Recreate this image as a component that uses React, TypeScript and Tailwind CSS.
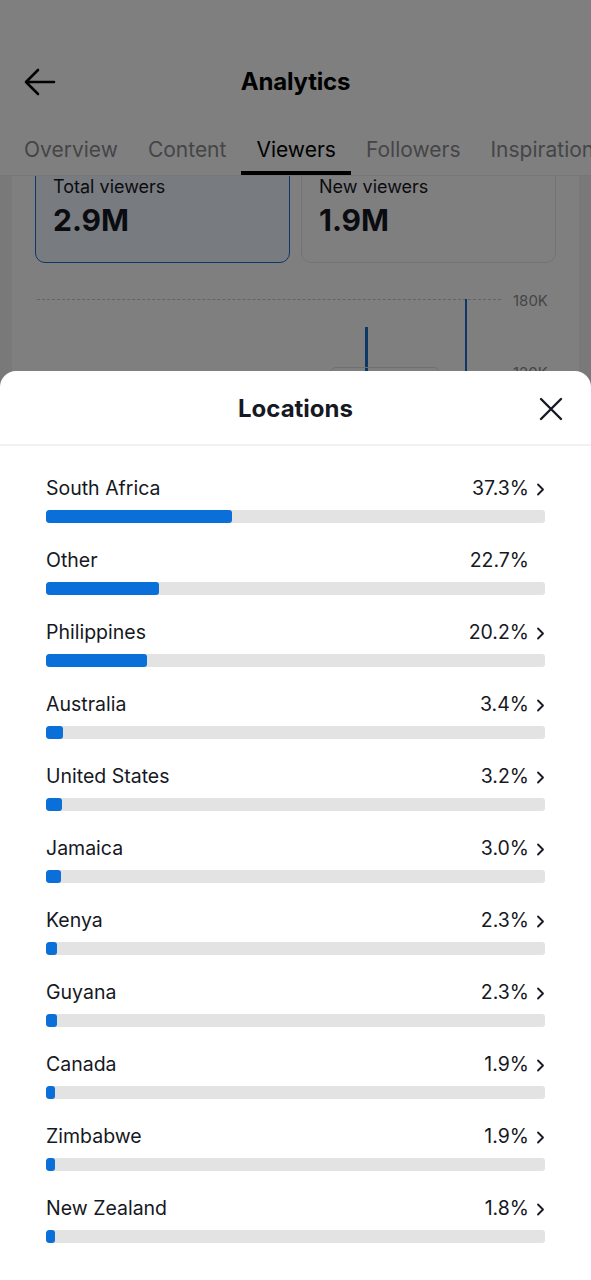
import React from "react";

const rows: { name: string; pct: number; chevron: boolean }[] = [
  { name: "South Africa", pct: 37.3, chevron: true },
  { name: "Other", pct: 22.7, chevron: false },
  { name: "Philippines", pct: 20.2, chevron: true },
  { name: "Australia", pct: 3.4, chevron: true },
  { name: "United States", pct: 3.2, chevron: true },
  { name: "Jamaica", pct: 3.0, chevron: true },
  { name: "Kenya", pct: 2.3, chevron: true },
  { name: "Guyana", pct: 2.3, chevron: true },
  { name: "Canada", pct: 1.9, chevron: true },
  { name: "Zimbabwe", pct: 1.9, chevron: true },
  { name: "New Zealand", pct: 1.8, chevron: true },
];

function Chevron() {
  return (
    <svg width="9" height="13" viewBox="0 0 9 13" fill="none">
      <path d="M2 1.5 L7 6.5 L2 11.5" stroke="#161823" strokeWidth="1.8" strokeLinecap="round" strokeLinejoin="round" />
    </svg>
  );
}

export default function App() {
  return (
    <div
      className="relative w-[591px] h-[1280px] overflow-hidden bg-white text-[#161823]"
      style={{ fontFamily: "Inter, Roboto, 'Liberation Sans', sans-serif" }}
    >
      {/* Background page */}
      <div className="flex flex-col">
        <div className="h-[58px]" />
        <div className="relative flex items-center justify-center h-[48px]">
          <div className="absolute left-[24px] top-[10px]">
            <svg width="32" height="28" viewBox="0 0 32 28" fill="none">
              <path d="M30 14 H3 M14 2 L2 14 L14 26" stroke="#000" strokeWidth="2.6" strokeLinecap="round" strokeLinejoin="round" />
            </svg>
          </div>
          <div className="text-[24px] font-bold text-black tracking-[-0.2px]">Analytics</div>
        </div>
        <div className="h-[22px]" />
        <div className="flex h-[48px] pl-[9px] border-b border-[#ececec] whitespace-nowrap">
          {["Overview", "Content", "Viewers", "Followers", "Inspiration"].map((t) => (
            <div
              key={t}
              className={
                "px-[15px] flex items-start pt-[6px] text-[21px] " +
                (t === "Viewers" ? "text-black border-b-[4px] border-black" : "text-[#8a8b91]")
              }
            >
              {t}
            </div>
          ))}
        </div>
        <div className="bg-[#f2f2f3] px-[12px] h-[300px] overflow-hidden">
          <div className="bg-white h-full overflow-hidden">
            <div className="flex gap-[11px] px-[23px] -mt-[30px]">
              <div className="w-[255px] h-[117px] rounded-[10px] border border-[#1b6fcf] bg-[#f1f7fe] px-[17px] pt-[31px]">
                <div className="text-[18px] leading-[18px] text-[#161823]">Total viewers</div>
                <div className="text-[30px] font-bold leading-[40px] mt-[4px]">2.9M</div>
              </div>
              <div className="w-[255px] h-[117px] rounded-[10px] border border-[#e6e6e8] bg-white px-[17px] pt-[31px]">
                <div className="text-[18px] leading-[18px] text-[#161823]">New viewers</div>
                <div className="text-[30px] font-bold leading-[40px] mt-[4px]">1.9M</div>
              </div>
            </div>
            <div className="relative h-[150px]">
              <div className="absolute left-[25px] top-[36px] w-[464px] border-t border-dashed border-[#c8c8cc]" />
              <div className="absolute left-[501px] top-[27px] text-[15px] text-[#8a8b91]">180K</div>
              <div className="absolute left-[501px] top-[99px] text-[15px] text-[#8a8b91]">120K</div>
              <div className="absolute left-[353px] top-[64px] w-[3px] h-[44px] bg-[#1b6fcf]" />
              <div className="absolute left-[453px] top-[36px] w-[2px] h-[80px] bg-[#1b6fcf]" />
              <div className="absolute left-[318px] top-[104px] w-[110px] h-[30px] rounded-[6px] border border-[#e0e0e0]" />
            </div>
          </div>
        </div>
      </div>

      {/* Dim overlay */}
      <div className="absolute inset-0 bg-black/50" />

      {/* Bottom sheet */}
      <div className="absolute left-0 right-0 top-[371px] bottom-0 bg-white rounded-t-[16px] flex flex-col">
        <div className="relative h-[75px] flex items-center justify-center border-b-[2px] border-[#f1f1f2]">
          <div className="text-[24px] font-bold text-[#161823] mt-[2px]">Locations</div>
          <div className="absolute right-[28px] top-[26px]">
            <svg width="24" height="24" viewBox="0 0 24 24" fill="none">
              <path d="M2 2 L22 22 M22 2 L2 22" stroke="#161823" strokeWidth="2.4" strokeLinecap="round" />
            </svg>
          </div>
        </div>
        <div className="flex flex-col pt-[31px] px-[46px]">
          {rows.map((r) => (
            <div key={r.name} className="flex flex-col h-[72px]">
              <div className="flex items-center justify-between h-[24px]">
                <span className="text-[19.5px] text-[#161823]">{r.name}</span>
                <span className="flex items-center">
                  <span className="text-[19.5px] text-[#161823]">{r.pct.toFixed(1)}%</span>
                  <span className="w-[16px] flex justify-end">{r.chevron ? <Chevron /> : null}</span>
                </span>
              </div>
              <div className="mt-[9px] h-[13px] rounded-[3px] bg-[#e3e3e4] overflow-hidden">
                <div className="h-full rounded-[3px] bg-[#0a6fd8]" style={{ width: `${r.pct}%` }} />
              </div>
            </div>
          ))}
        </div>
      </div>
    </div>
  );
}
